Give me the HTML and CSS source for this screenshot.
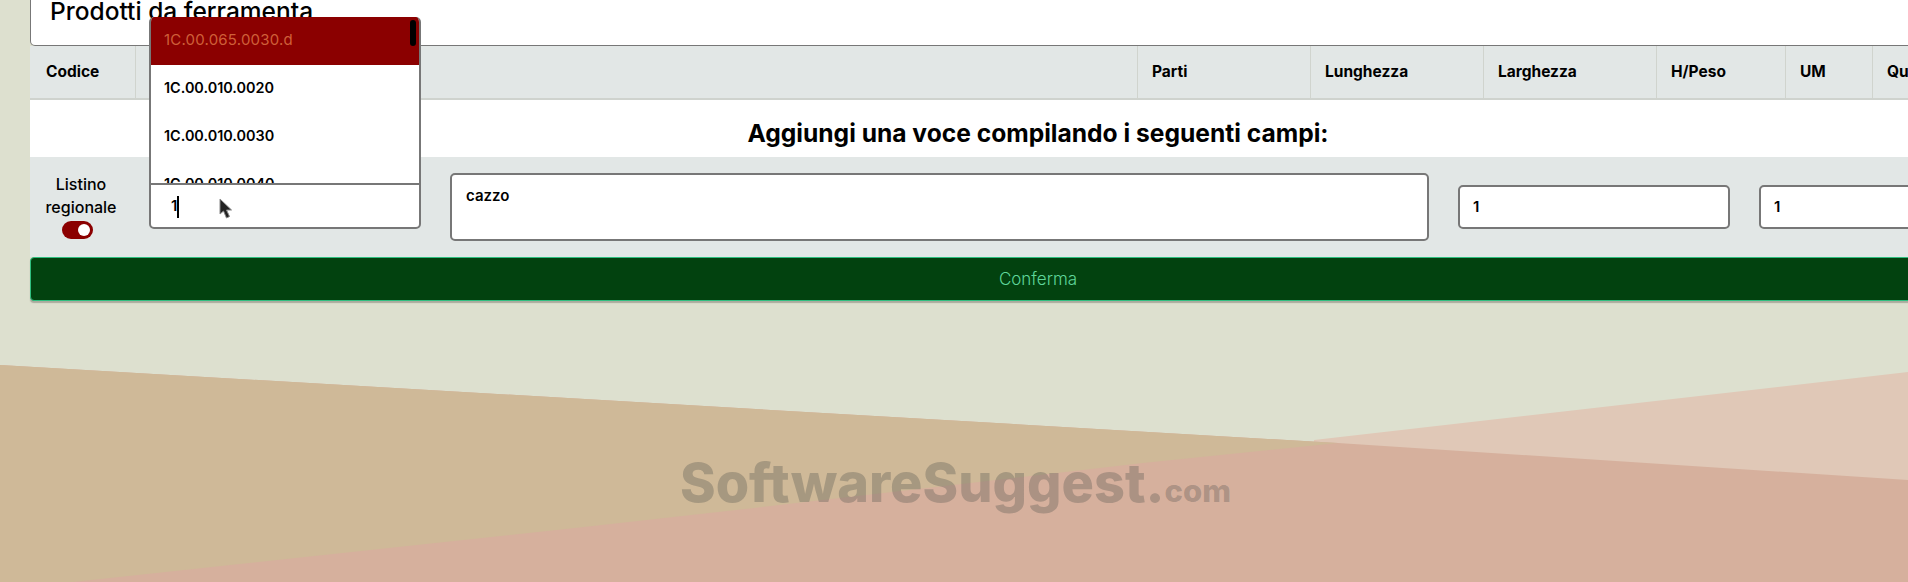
FILE: index.html
```html
<!DOCTYPE html>
<html lang="en">
<head>
    <meta charset="UTF-8">
    <meta name="viewport" content="width=device-width, initial-scale=1.0">
    <title>Prodotti da ferramenta</title>
    <link rel="stylesheet" href="styles.css">
</head>
<body>
    <!-- Background shapes -->
    <svg class="bg-shapes" viewBox="0 0 1908 582" width="1908" height="582" aria-hidden="true">
        <rect width="1908" height="582" fill="#dde0cf"/>
        <polygon points="1314,440 1908,372 1908,582 1314,582" fill="#e0c8b7"/>
        <polygon points="0,365 1338,443 1908,480 1908,582 0,582" fill="#d6b09d"/>
        <polygon points="0,365 1338,443 1143,463 754,508 584,527 73,582 0,582" fill="#cfb998"/>
    </svg>

    <div class="container">
        <div class="title-card">Prodotti da ferramenta</div>

        <div class="table-head">
            <div class="col">Codice</div>
            <div class="col"></div>
            <div class="col">Parti</div>
            <div class="col">Lunghezza</div>
            <div class="col">Larghezza</div>
            <div class="col">H/Peso</div>
            <div class="col">UM</div>
            <div class="col">Quantità</div>
        </div>

        <h2 class="add-title">Aggiungi una voce compilando i seguenti campi:</h2>

        <form class="add-row">
            <div class="regional">
                <span class="regional-label">Listino regionale</span>
                <span class="toggle"></span>
            </div>

            <div class="code-field">
                <!-- Autocomplete list, opens above the field -->
                <ul class="code-list">
                    <li class="selected">1C.00.065.0030.d</li>
                    <li>1C.00.010.0020</li>
                    <li>1C.00.010.0030</li>
                    <li>1C.00.010.0040</li>
                    <li class="scroll-thumb"></li>
                </ul>
                <div class="code-input">1<span class="caret"></span></div>
                <svg class="mouse" viewBox="0 0 14 22" width="14" height="22" aria-hidden="true">
                    <path d="M1 1 L1 16 L4.500 13 L7.500 20 L10.500 18.500 L7.500 12 L12.500 12 Z" fill="#222" stroke="#888" stroke-width="1"/>
                </svg>
            </div>

            <textarea class="field desc-field">cazzo</textarea>
            <input class="field num-field" type="text" value="1">
            <input class="field num-field" type="text" value="1">
        </form>

        <button class="confirm" type="button">Conferma</button>
    </div>

    <div class="watermark">SoftwareSuggest.<span class="dot-com">com</span></div>
</body>
</html>
```

FILE: styles.css
```css
/* ===== Base Styles ===== */
html, body {
    width: 1908px;
    height: 582px;
    overflow: hidden;
}

body {
    position: relative;
    margin: 0;
    font-family: Inter, "Liberation Sans", sans-serif;
    color: #000;
    background: #dde0cf;
}

.bg-shapes {
    position: absolute;
    left: 0;
    top: 0;
}

.container {
    position: relative;
    width: 2016px;
    margin-left: 30px;
}

/* ===== Title ===== */
.title-card {
    box-sizing: border-box;
    height: 46px;
    padding-left: 19px;
    font-size: 24.500px;
    font-weight: 500;
    line-height: 22px;
    background: #fff;
    border: 1px solid #777;
    border-top: none;
    border-radius: 0 0 5px 5px;
}

/* ===== Table Head ===== */
.table-head {
    display: grid;
    grid-template-columns: 105px 1002px 173px 173px 173px 129px 87px 1fr;
    height: 54px;
    background: #e2e7e6;
    border-bottom: 2px solid #cfd3ce;
    box-sizing: border-box;
}

.col {
    padding-left: 14px;
    font-size: 15.500px;
    font-weight: 700;
    line-height: 52px;
    border-left: 1px solid #d0d4ce;
}

.col:first-child {
    padding-left: 16px;
    border-left: none;
}

/* ===== Add Row ===== */
.add-title {
    box-sizing: border-box;
    height: 57px;
    margin: 0;
    padding-top: 12px;
    font-size: 24.600px;
    font-weight: 700;
    line-height: 42px;
    text-align: center;
    background: #fff;
}

.add-row {
    display: flex;
    align-items: center;
    gap: 29px;
    height: 100px;
    background: #e2e7e6;
}

.regional {
    display: flex;
    flex-direction: column;
    align-items: center;
    flex: 0 0 88px;
    box-sizing: border-box;
    padding-left: 12px;
    margin-bottom: 2px;
    font-size: 16px;
    font-weight: 500;
    line-height: 23px;
    text-align: center;
}

.regional-label {
    width: 78px;
}

.toggle {
    position: relative;
    display: block;
    width: 31px;
    height: 18px;
    margin-top: 2px;
    margin-right: 8px;
    background: #8b0000;
    border-radius: 9px;
}

.toggle::after {
    content: "";
    position: absolute;
    right: 3px;
    top: 3px;
    width: 12px;
    height: 12px;
    background: #fff;
    border-radius: 50%;
}

.field {
    box-sizing: border-box;
    margin: 0;
    padding: 0 13px;
    font-family: inherit;
    font-size: 15px;
    font-weight: 600;
    color: #000;
    background: #fff;
    border: 2px solid #777;
    border-radius: 5px;
    outline: none;
}

.desc-field {
    flex: 0 0 979px;
    height: 68px;
    padding: 11px 14px 0;
    resize: none;
}

.num-field {
    flex: 0 0 272px;
    height: 44px;
    padding-bottom: 2px;
}

/* ===== Code Autocomplete ===== */
.code-field {
    position: relative;
    flex: 0 0 272px;
    margin-bottom: 2px;
}

.code-input {
    box-sizing: border-box;
    height: 46px;
    padding-left: 20px;
    font-size: 15px;
    font-weight: 600;
    line-height: 42px;
    background: #fff;
    border: 2px solid #777;
    border-radius: 0 0 5px 5px;
}

.caret {
    display: inline-block;
    width: 2px;
    height: 22px;
    vertical-align: middle;
    background: #000;
}

.code-list {
    position: absolute;
    left: 0;
    right: 0;
    bottom: 46px;
    height: 166px;
    margin: 0;
    padding: 0;
    overflow: hidden;
    list-style: none;
    background: #fff;
    border-left: 2px solid #777;
    border-right: 2px solid #777;
    border-radius: 5px 5px 0 0;
    box-sizing: border-box;
}

.code-list li {
    height: 48px;
    padding-left: 13px;
    font-size: 14.400px;
    font-weight: 600;
    line-height: 46px;
}

.code-list .selected {
    font-size: 15px;
    font-weight: 400;
    letter-spacing: 0.200px;
    color: #cf5f38;
    background: #8b0000;
}

.code-list .scroll-thumb {
    position: absolute;
    right: 3px;
    top: 3px;
    width: 6px;
    height: 26px;
    padding: 0;
    background: #000;
    border-radius: 3px;
}

.mouse {
    position: absolute;
    left: 70px;
    top: 15px;
}

/* ===== Confirm Button ===== */
.confirm {
    display: block;
    width: 100%;
    height: 44px;
    padding: 0;
    font-family: inherit;
    font-size: 17px;
    font-weight: 300;
    color: #5fd69a;
    background: #02420f;
    border: 1px solid #2fbf80;
    border-radius: 4px;
    box-shadow: 0 2px 1px rgba(120, 120, 110, 0.5);
}

/* ===== Watermark ===== */
.watermark {
    position: absolute;
    left: 680px;
    top: 450px;
    font-family: Inter, "Open Sans", sans-serif;
    font-size: 54px;
    font-weight: 800;
    line-height: 66px;
    white-space: nowrap;
    color: rgba(74, 75, 72, 0.3);
}

.dot-com {
    font-size: 31px;
}
```
